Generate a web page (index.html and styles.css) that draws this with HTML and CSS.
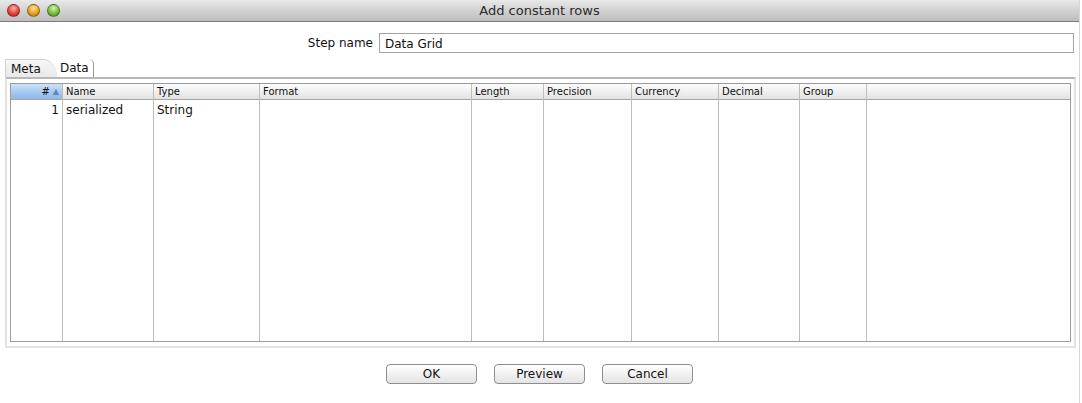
FILE: index.html
```html
<!DOCTYPE html>
<html>
<head>
<meta charset="utf-8">
<link rel="stylesheet" href="styles.css">
</head>
<body>
<div class="window">
  <div class="titlebar">
    <div class="lights">
      <span class="light red"></span>
      <span class="light yellow"></span>
      <span class="light green"></span>
    </div>
    <div class="title">Add constant rows</div>
  </div>
  <div class="content">
    <div class="stepname">
      <label class="label">Step name</label>
      <div class="input">Data Grid</div>
    </div>
    <div class="tabs">
      <div class="tab active">Meta</div>
      <div class="tab">Data</div>
    </div>
    <div class="panel">
      <div class="grid">
        <div class="col c-num"><div class="hd sel"><span>#</span><span class="arrow">▲</span></div><div class="cell num">1</div><div class="fill"></div></div>
        <div class="col c-name"><div class="hd">Name</div><div class="cell">serialized</div><div class="fill"></div></div>
        <div class="col c-type"><div class="hd">Type</div><div class="cell">String</div><div class="fill"></div></div>
        <div class="col c-format"><div class="hd">Format</div><div class="cell"></div><div class="fill"></div></div>
        <div class="col c-length"><div class="hd">Length</div><div class="cell"></div><div class="fill"></div></div>
        <div class="col c-prec"><div class="hd">Precision</div><div class="cell"></div><div class="fill"></div></div>
        <div class="col c-cur"><div class="hd">Currency</div><div class="cell"></div><div class="fill"></div></div>
        <div class="col c-dec"><div class="hd">Decimal</div><div class="cell"></div><div class="fill"></div></div>
        <div class="col c-group"><div class="hd">Group</div><div class="cell"></div><div class="fill"></div></div>
        <div class="col c-rest last"><div class="hd"></div><div class="cell"></div><div class="fill"></div></div>
      </div>
    </div>
    <div class="buttons">
      <div class="btn">OK</div>
      <div class="btn">Preview</div>
      <div class="btn">Cancel</div>
    </div>
  </div>
</div>
</body>
</html>
```
FILE: styles.css
```css
html, body {
  margin: 0;
  padding: 0;
  background: #ffffff;
}
body {
  font-family: "DejaVu Sans", "Liberation Sans", sans-serif;
  color: #111;
}
.window {
  width: 1079px;
  height: 403px;
  border-right: 1px solid #d6d6d6;
  display: flex;
  flex-direction: column;
  background: #fff;
}
.titlebar {
  height: 22px;
  box-sizing: border-box;
  border-bottom: 1px solid #7a7a7a;
  background: linear-gradient(#e9e9e9, #d2d2d2 50%, #bdbdbd);
  display: flex;
  align-items: center;
  position: relative;
}
.lights {
  display: flex;
  gap: 7px;
  padding-left: 7px;
  position: relative;
  z-index: 1;
}
.light {
  width: 13px;
  height: 13px;
  border-radius: 50%;
  box-sizing: border-box;
  border: 1px solid rgba(0,0,0,0.35);
}
.red { background: radial-gradient(circle at 50% 30%, #ffb0a8, #e5453a 55%, #a8160e); }
.yellow { background: radial-gradient(circle at 50% 30%, #ffe2a0, #e8a324 55%, #a46409); }
.green { background: radial-gradient(circle at 50% 30%, #d8f5b0, #77bf3d 55%, #3e7d12); }
.title {
  position: absolute;
  left: 0;
  right: 0;
  text-align: center;
  font-size: 13px;
  color: #2a2a2a;
  line-height: 22px;
}
.content {
  flex: 1;
  display: flex;
  flex-direction: column;
  padding: 11px 0 0 5px;
}
.stepname {
  display: flex;
  align-items: center;
  height: 20px;
}
.label {
  width: 374px;
  text-align: right;
  font-size: 12px;
  padding-right: 6px;
  box-sizing: border-box;
}
.input {
  width: 695px;
  height: 20px;
  box-sizing: border-box;
  border: 1px solid #a3a3a3;
  font-size: 12px;
  padding: 3px 0 0 5px;
}
.tabs {
  display: flex;
  margin-top: 5px;
  height: 19px;
  align-items: flex-end;
}
.tab {
  font-size: 12px;
  height: 18px;
  box-sizing: border-box;
  padding: 2px 8px 0 5px;
}
.tab.active {
  background: linear-gradient(#f6f6f6, #e9e9e9);
  border-top: 1px solid #d0d0d0;
  border-left: 1px solid #d0d0d0;
  border-top-right-radius: 14px 18px;
  width: 52px;
}
.tab + .tab {
  border-right: 1px solid #9a9a9a;
  border-top-right-radius: 5px;
  padding-left: 3px;
  padding-right: 4px;
}
.panel {
  width: 1071px;
  height: 271px;
  box-sizing: border-box;
  border: 2px solid #e3e3e3;
  border-top: 2px solid #b8b8b8;
  padding: 4px 3px 4px 3px;
}
.grid {
  display: flex;
  height: 100%;
  box-sizing: border-box;
  border: 1px solid #9c9c9c;
}
.col {
  display: flex;
  flex-direction: column;
  border-right: 1px solid #bdbdbd;
  box-sizing: border-box;
}
.col.last { border-right: none; flex: 1; }
.c-num { width: 52px; }
.c-name { width: 91px; }
.c-type { width: 106px; }
.c-format { width: 212px; }
.c-length { width: 72px; }
.c-prec { width: 88px; }
.c-cur { width: 87px; }
.c-dec { width: 81px; }
.c-group { width: 67px; }
.hd {
  height: 16px;
  box-sizing: border-box;
  border-bottom: 1px solid #a5a5a5;
  background: linear-gradient(#fbfbfb, #f0f0f0 50%, #e2e2e2);
  font-size: 10px;
  line-height: 15px;
  padding-left: 3px;
  color: #111;
}
.hd.sel {
  background: linear-gradient(#cfe2f8, #a9cbf1 50%, #8cb8ea);
  text-align: right;
  padding-right: 3px;
  display: flex;
  justify-content: flex-end;
  gap: 3px;
}
.arrow {
  color: #5d87b8;
  font-size: 8px;
}
.cell {
  height: 18px;
  font-size: 12px;
  line-height: 20px;
  padding-left: 3px;
}
.cell.num {
  text-align: right;
  padding-right: 3px;
}
.fill { flex: 1; }
.buttons {
  display: flex;
  gap: 17px;
  padding-left: 381px;
  margin-top: 16px;
}
.btn {
  width: 91px;
  height: 20px;
  box-sizing: border-box;
  border: 1px solid #8e8e8e;
  border-radius: 4px;
  background: linear-gradient(#ffffff, #f1f1f1 50%, #e4e4e4);
  font-size: 12px;
  text-align: center;
  line-height: 19px;
}
```
